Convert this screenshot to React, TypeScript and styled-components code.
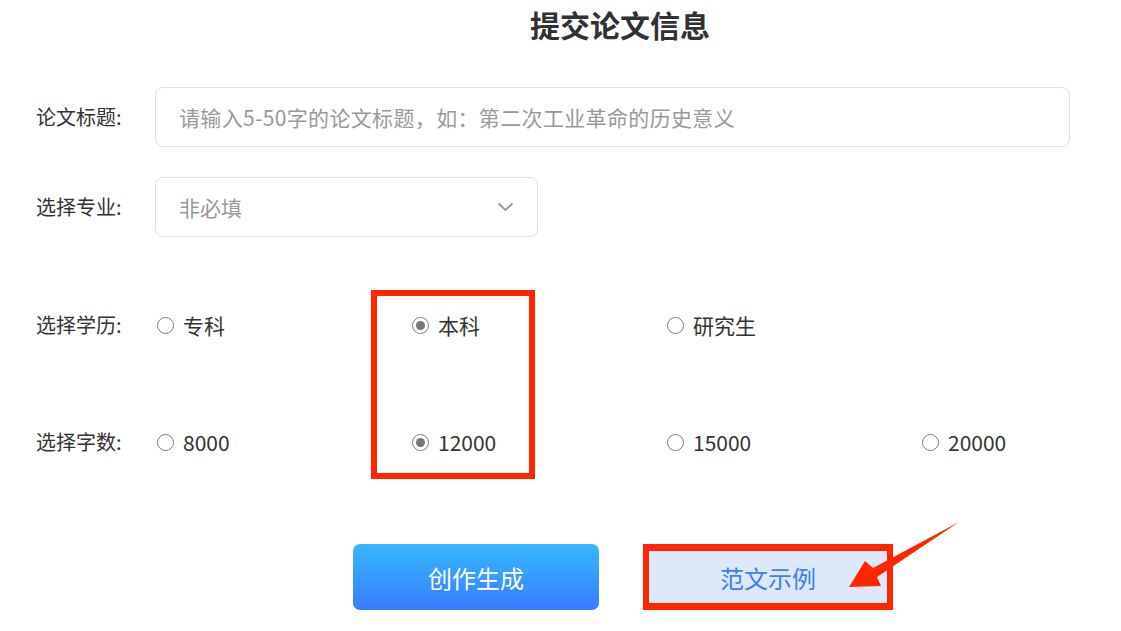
import { useState } from "react";
import styled, { createGlobalStyle } from "styled-components";

const GlobalStyle = createGlobalStyle`
  body {
    margin: 0;
    background: #fff;
    font-family: "Noto Sans CJK SC", "Noto Sans", sans-serif;
    color: #333;
  }
`;

const Page = styled.div`
  position: relative;
  width: 100%;
  overflow: hidden;
  min-height: 631px;
`;

const Title = styled.h2`
  margin: 0;
  padding-left: 119px;
  text-align: center;
  font-size: 30px;
  font-weight: 700;
  line-height: 48px;
  color: #303133;
`;

const Form = styled.div`
  position: relative;
  margin-top: 39px;
  padding-left: 36px;
`;

const FieldRow = styled.div<{ $gap?: number }>`
  display: flex;
  align-items: center;
  margin-top: ${(p) => p.$gap ?? 0}px;
`;

const Label = styled.span`
  width: 119px;
  flex-shrink: 0;
  font-size: 20px;
  line-height: 1;
  color: #333;
`;

const TextInput = styled.input`
  box-sizing: border-box;
  width: 915px;
  height: 60px;
  padding: 0 23px;
  border: 1px solid #dcdfe6;
  border-radius: 8px;
  font-family: inherit;
  font-size: 21px;
  letter-spacing: 0.35px;
  color: #333;
  outline: none;
  &::placeholder {
    color: #999;
  }
`;

const Select = styled.div`
  box-sizing: border-box;
  width: 383px;
  height: 60px;
  padding: 0 23px;
  border: 1px solid #dcdfe6;
  border-radius: 8px;
  display: flex;
  align-items: center;
  justify-content: space-between;
  cursor: pointer;
`;

const SelectText = styled.span`
  font-size: 21px;
  color: #999;
`;

const Options = styled.div`
  display: grid;
  grid-template-columns: repeat(4, 255px);
  padding-left: 2px;
`;

const Option = styled.label`
  display: flex;
  align-items: center;
  gap: 9px;
  font-size: 21px;
  line-height: 1;
  color: #333;
  cursor: pointer;
`;

const Circle = styled.span<{ $on: boolean }>`
  box-sizing: border-box;
  width: 17px;
  height: 17px;
  border-radius: 50%;
  border: 1.6px solid #7d7d7d;
  display: flex;
  align-items: center;
  justify-content: center;
  &::after {
    content: "";
    width: 9px;
    height: 9px;
    border-radius: 50%;
    background: #777;
    display: ${(p) => (p.$on ? "block" : "none")};
  }
`;

const RadioRow = styled.div<{ $gap: number }>`
  display: flex;
  align-items: center;
  height: 60px;
  margin-top: ${(p) => p.$gap}px;
`;

const Highlight = styled.div`
  position: absolute;
  left: 371px;
  top: 203px;
  width: 164px;
  height: 189px;
  box-sizing: border-box;
  border: 6px solid #ff2600;
  pointer-events: none;
`;

const ButtonRow = styled.div`
  display: flex;
  justify-content: center;
  gap: 46px;
  margin-top: 72px;
  padding-left: 123px;
`;

const GenerateButton = styled.button`
  width: 246px;
  height: 66px;
  border: 0;
  border-radius: 7px;
  background: linear-gradient(180deg, #36b8ff 0%, #3a7bff 100%);
  color: #fff;
  font-family: inherit;
  font-size: 24px;
  cursor: pointer;
`;

const SampleWrap = styled.div`
  position: relative;
  &::after {
    content: "";
    position: absolute;
    top: 0;
    bottom: 0;
    left: -2px;
    right: -2px;
    border-style: solid;
    border-color: #ff2600;
    border-width: 7px 6px;
    pointer-events: none;
  }
`;

const SampleButton = styled.button`
  display: block;
  width: 246px;
  height: 66px;
  border: 0;
  background: #dde8fb;
  color: #3f7ef5;
  font-family: inherit;
  font-size: 24px;
  cursor: pointer;
`;

const Arrow = styled.svg`
  position: absolute;
  left: 840px;
  top: 515px;
  pointer-events: none;
`;

const degrees = ["专科", "本科", "研究生"];
const counts = ["8000", "12000", "15000", "20000"];

export default function App() {
  const [degree, setDegree] = useState("本科");
  const [count, setCount] = useState("12000");

  return (
    <Page>
      <GlobalStyle />
      <Title>提交论文信息</Title>
      <Form>
        <FieldRow>
          <Label>论文标题:</Label>
          <TextInput placeholder="请输入5-50字的论文标题，如：第二次工业革命的历史意义" />
        </FieldRow>
        <FieldRow $gap={30}>
          <Label>选择专业:</Label>
          <Select>
            <SelectText>非必填</SelectText>
            <svg width="17" height="10" viewBox="0 0 17 10" fill="none">
              <path d="M1.5 1.5 L8.5 8 L15.5 1.5" stroke="#999" strokeWidth="1.8" />
            </svg>
          </Select>
        </FieldRow>
        <RadioRow $gap={58}>
          <Label>选择学历:</Label>
          <Options>
            {degrees.map((d) => (
              <Option key={d} onClick={() => setDegree(d)}>
                <Circle $on={degree === d} />
                {d}
              </Option>
            ))}
          </Options>
        </RadioRow>
        <RadioRow $gap={57}>
          <Label>选择字数:</Label>
          <Options>
            {counts.map((c) => (
              <Option key={c} onClick={() => setCount(c)}>
                <Circle $on={count === c} />
                {c}
              </Option>
            ))}
          </Options>
        </RadioRow>
        <Highlight />
      </Form>
      <ButtonRow>
        <GenerateButton>创作生成</GenerateButton>
        <SampleWrap>
          <SampleButton>范文示例</SampleButton>
        </SampleWrap>
      </ButtonRow>
      <Arrow width="130" height="80" viewBox="0 0 130 80">
        <polygon points="9,72 25,46 33,53 119,7 37,62 41,71" fill="#ff2600" />
      </Arrow>
    </Page>
  );
}
